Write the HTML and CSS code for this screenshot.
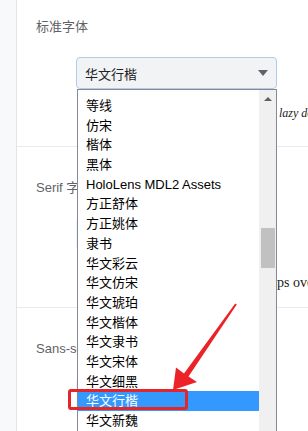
FILE: index.html
```html
<!DOCTYPE html>
<html lang="zh-CN">
<head>
    <meta charset="UTF-8">
    <meta name="viewport" content="width=device-width, initial-scale=1.0">
    <title>字体设置</title>
    <link rel="stylesheet" href="styles.css">
</head>
<body>
    <div class="page">
        <aside class="side"></aside>
        <main class="main">
            <section class="section">
                <div class="label">标准字体</div>
                <div class="select is-open">
                    <span>华文行楷</span>
                    <span class="caret"></span>
                </div>
                <p class="sample sample-script">lazy dog</p>
            </section>
            <section class="section">
                <div class="label">Serif 字体</div>
                <div class="select">
                    <span>宋体</span>
                    <span class="caret"></span>
                </div>
                <p class="sample sample-serif">ps over the lazy dog</p>
            </section>
            <section class="section">
                <div class="label">Sans-serif 字体</div>
                <div class="select">
                    <span>微软雅黑</span>
                    <span class="caret"></span>
                </div>
            </section>
        </main>
    </div>

    <div class="dropdown">
        <ul class="options">
            <li>等线</li>
            <li>仿宋</li>
            <li>楷体</li>
            <li>黑体</li>
            <li>HoloLens MDL2 Assets</li>
            <li>方正舒体</li>
            <li>方正姚体</li>
            <li>隶书</li>
            <li>华文彩云</li>
            <li>华文仿宋</li>
            <li>华文琥珀</li>
            <li>华文楷体</li>
            <li>华文隶书</li>
            <li>华文宋体</li>
            <li>华文细黑</li>
            <li class="selected">华文行楷</li>
            <li>华文新魏</li>
            <li>幼圆</li>
        </ul>
        <div class="scrollbar">
            <div class="scroll-up"><span class="up-arrow"></span></div>
            <div class="scroll-track"><div class="scroll-thumb"></div></div>
        </div>
    </div>

    <div class="callout-box"></div>
    <svg class="callout-arrow" width="308" height="431" viewBox="0 0 308 431">
        <polygon points="235.2,303.4 236.8,304.6 188.5,376.5 197,382 173,390 176,367.5 184,373.5" fill="#ec2228"/>
    </svg>
</body>
</html>
```

FILE: styles.css
```css
* {
    margin: 0;
    padding: 0;
    box-sizing: border-box;
}

body {
    width: 308px;
    height: 431px;
    overflow: hidden;
    position: relative;
    background: #fff;
    font-family: 'Liberation Sans', 'Noto Sans CJK SC', sans-serif;
    color: #202124;
}

.page {
    display: flex;
    height: 100%;
}

.side {
    width: 17px;
    flex-shrink: 0;
    background: #f8f9fa;
    border-right: 1px solid #e3e5e8;
}

.main {
    flex: 1;
    margin-top: -14px;
}

.section {
    height: 161px;
    padding: 32px 0 0 19px;
    border-bottom: 1px solid #e8eaed;
}

.label {
    font-size: 13px;
    line-height: 18px;
    color: #5f6368;
}

.select {
    display: flex;
    align-items: center;
    justify-content: space-between;
    width: 201px;
    height: 32px;
    margin: 21px 0 0 40px;
    padding: 0 8px;
    background: #f1f3f4;
    border: 1px solid transparent;
    border-radius: 4px;
    font-size: 13px;
    color: #202124;
}

.select.is-open {
    border-color: #b3cbeb;
}

.caret {
    width: 0;
    height: 0;
    border-left: 5px solid transparent;
    border-right: 5px solid transparent;
    border-top: 6px solid #5f6368;
}

.sample {
    white-space: nowrap;
    line-height: 18px;
    color: #202124;
}

.sample-script {
    margin: 15px 0 0 243px;
    font-family: 'Liberation Serif', serif;
    font-style: italic;
    font-size: 12px;
}

.sample-serif {
    margin: 24px 0 0 241px;
    font-family: 'Liberation Serif', serif;
    font-size: 14px;
}

/* open list of the first select */
.dropdown {
    position: absolute;
    left: 77px;
    top: 89px;
    width: 200px;
    height: 360px;
    display: flex;
    background: #fff;
    border: 1px solid #838a93;
}

.options {
    flex: 1;
    list-style: none;
    padding-top: 6px;
}

.options li {
    height: 19.7px;
    line-height: 19.7px;
    padding-left: 8px;
    font-size: 13px;
    color: #000;
    white-space: nowrap;
}

.options li.selected {
    background: #3399ff;
    color: #fff;
}

.scrollbar {
    width: 17px;
    background: #f0f0f0;
    display: flex;
    flex-direction: column;
}

.scroll-up {
    height: 17px;
    display: flex;
    align-items: center;
    justify-content: center;
}

.up-arrow {
    width: 0;
    height: 0;
    border-left: 4px solid transparent;
    border-right: 4px solid transparent;
    border-bottom: 4px solid #606060;
}

.scroll-track {
    flex: 1;
    padding: 121px 1px 0 2px;
}

.scroll-thumb {
    height: 40px;
    background: #c1c1c1;
}

/* annotation */
.callout-box {
    position: absolute;
    left: 68px;
    top: 389px;
    width: 120px;
    height: 21px;
    border: 3px solid #e3262b;
    border-radius: 3px;
}

.callout-arrow {
    position: absolute;
    left: 0;
    top: 0;
}
```
